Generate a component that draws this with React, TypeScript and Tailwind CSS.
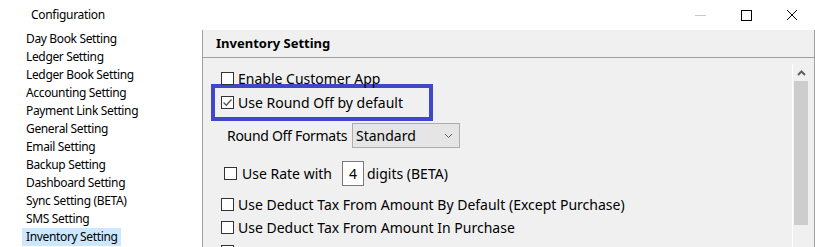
const menu = [
  'Day Book Setting',
  'Ledger Setting',
  'Ledger Book Setting',
  'Accounting Setting',
  'Payment Link Setting',
  'General Setting',
  'Email Setting',
  'Backup Setting',
  'Dashboard Setting',
  'Sync Setting (BETA)',
  'SMS Setting',
  'Inventory Setting',
];

function Box({ checked = false }: { checked?: boolean }) {
  return (
    <span className="w-[13px] h-[13px] border border-[#333] bg-white flex items-center justify-center shrink-0">
      {checked && (
        <svg width="11" height="11" viewBox="0 0 11 11">
          <path d="M1.5 5.5 L4.3 8.3 L9.5 2.5" fill="none" stroke="#555" strokeWidth="1.3" />
        </svg>
      )}
    </span>
  );
}

export default function App() {
  return (
    <div className="w-[815px] h-[247px] bg-white overflow-hidden flex flex-col text-[#000]" style={{ fontFamily: '"Noto Sans", sans-serif' }}>
      {/* title bar */}
      <div className="h-[30px] flex items-center shrink-0">
        <span className="ml-[31px] text-[12px] tracking-[-0.3px]">Configuration</span>
        <div className="ml-auto flex items-center h-full">
          <div className="w-[46px] h-full flex items-center justify-center">
            <span className="w-[11px] h-px bg-[#c8c8c8]" />
          </div>
          <div className="w-[46px] h-full flex items-center justify-center">
            <span className="w-[11px] h-[11px] border border-black" />
          </div>
          <div className="w-[46px] h-full flex items-center justify-center">
            <svg width="12" height="12" viewBox="0 0 12 12">
              <path d="M1 1 L11 11 M11 1 L1 11" stroke="#000" strokeWidth="1" />
            </svg>
          </div>
        </div>
      </div>

      <div className="flex flex-1 min-h-0">
        {/* left list */}
        <div className="w-[203px] shrink-0 border-r border-[#a0a0a0] bg-white">
          {menu.map((m) => (
            <div key={m} className="h-[18px] flex items-center">
              <span
                className={
                  'ml-[22px] pl-[4px] pr-[3px] h-[18px] flex items-center text-[12px] tracking-[-0.35px] ' +
                  (m === 'Inventory Setting' ? 'bg-[#cce8ff]' : '')
                }
              >
                {m}
              </span>
            </div>
          ))}
        </div>

        {/* right panel */}
        <div className="flex-1 bg-[#f0f0f0] border-r border-[#a0a0a0] flex flex-col">
          <div className="h-[28px] shrink-0 border-b border-[#a0a0a0] flex items-center pl-[13px]">
            <span className="text-[13px] font-bold">Inventory Setting</span>
          </div>
          <div className="flex flex-1 min-h-0">
            <div className="flex-1 text-[14px]">
              <div className="mt-[14px] ml-[18px] flex items-center gap-[4px] h-[13px]">
                <Box />
                <span>Enable Customer App</span>
              </div>
              <div className="mt-[-1px] ml-[8px] w-[222px] h-[37px] border-[4px] border-[#3f48cc] flex items-center pl-[6px] gap-[4px]">
                <Box checked />
                <span>Use Round Off by default</span>
              </div>
              <div className="mt-[2px] ml-[24px] flex items-center h-[25px]">
                <span className="w-[125px] shrink-0 whitespace-nowrap tracking-[-0.3px]">Round Off Formats</span>
                <div className="w-[108px] h-[25px] bg-[#e5e5e5] border border-[#adadad] flex items-center pl-[3px] pr-[6px]">
                  <span>Standard</span>
                  <svg className="ml-auto" width="9" height="6" viewBox="0 0 9 6">
                    <path d="M1 1 L4.5 4.5 L8 1" fill="none" stroke="#606060" strokeWidth="1" />
                  </svg>
                </div>
              </div>
              <div className="mt-[13px] ml-[21px] flex items-center h-[25px]">
                <Box />
                <span className="ml-[5px]">Use Rate with</span>
                <span className="ml-[10px] w-[22px] h-[25px] bg-white border border-[#7a7a7a] flex items-center justify-center">4</span>
                <span className="ml-[3px]">digits (BETA)</span>
              </div>
              <div className="mt-[12px] ml-[18px] flex items-center gap-[4px] h-[13px]">
                <Box />
                <span>Use Deduct Tax From Amount By Default (Except Purchase)</span>
              </div>
              <div className="mt-[10px] ml-[18px] flex items-center gap-[4px] h-[13px]">
                <Box />
                <span>Use Deduct Tax From Amount In Purchase</span>
              </div>
              <div className="mt-[11px] ml-[18px] flex items-center h-[13px]">
                <Box />
              </div>
            </div>
            {/* scrollbar */}
            <div className="mt-[6px] w-[17px] border-l border-white flex flex-col shrink-0">
              <div className="h-[17px] flex items-center justify-center">
                <svg width="9" height="6" viewBox="0 0 9 6">
                  <path d="M1 5 L4.5 1.5 L8 5" fill="none" stroke="#606060" strokeWidth="2" />
                </svg>
              </div>
              <div className="mx-px h-[144px] bg-[#cdcdcd]" />
            </div>
            <div className="w-[5px] shrink-0" />
          </div>
        </div>
      </div>
    </div>
  );
}
